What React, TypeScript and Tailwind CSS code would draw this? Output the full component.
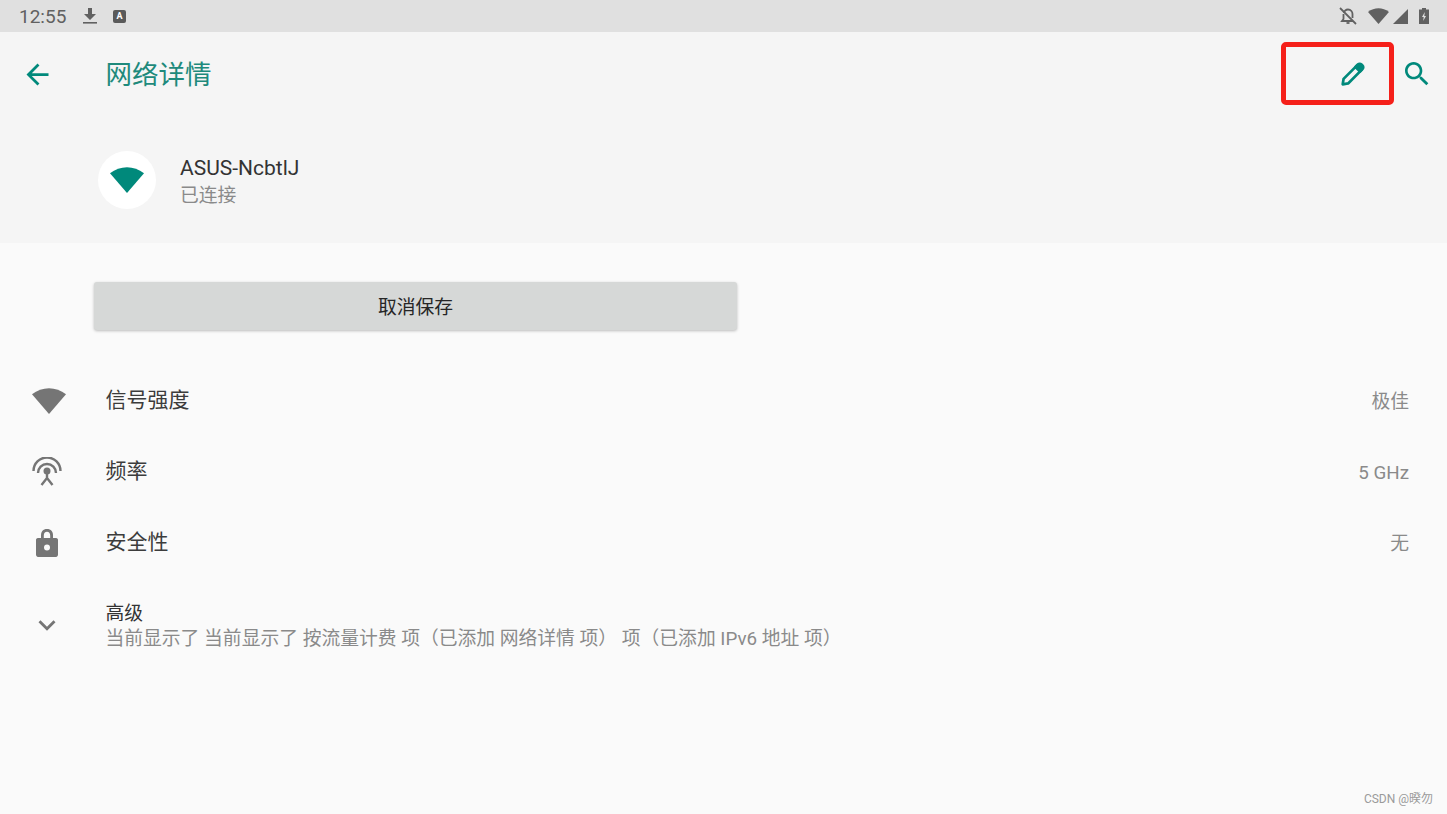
const font = { fontFamily: 'Roboto, "Noto Sans CJK SC", sans-serif' };

function WifiFull({ className }: { className: string }) {
  return (
    <svg viewBox="0 0 34 26" className={className} fill="currentColor">
      <path d="M17 26 L0 6.300 C5 2.400 11 0.300 17 0.300 C23 0.300 29 2.400 34 6.300 Z" />
    </svg>
  );
}

function DetailRow({ icon, label, value, height }: { icon: React.ReactNode; label: string; value: string; height: string }) {
  return (
    <div className={`flex items-center pr-[38px] ${height}`}>
      <div className="w-[105.500px] pl-[30px] shrink-0 flex items-center text-[#757575]">{icon}</div>
      <div className="flex-1 pt-[1px] text-[21px] text-[#3c3c3c]">{label}</div>
      <div className="pt-[3px] text-[18.800px] text-[#8a8a8a]">{value}</div>
    </div>
  );
}

export default function App() {
  return (
    <div className="relative w-[1447px] h-[814px] overflow-hidden bg-[#fafafa]" style={font}>
      {/* status bar */}
      <div className="h-[32px] bg-[#e0e0e0] flex items-center pl-[19px] pr-[18px] text-[#616161]">
        <span className="text-[19px] leading-none w-[64px]">12:55</span>
        <svg viewBox="0 0 14 16" className="w-[14px] h-[16px]" fill="currentColor">
          <path d="M5 0 H9 V6 H13 L7 12 L1 6 H5 Z" />
          <rect x="0" y="14" width="14" height="1.600" />
        </svg>
        <div className="ml-[16px] w-[13px] h-[13px] rounded-[2px] bg-[#5a5a5a] text-white text-[9px] font-bold leading-[13px] text-center">A</div>
        <div className="flex-1" />
        <svg viewBox="0 0 18 18" className="w-[18px] h-[18px] mr-[11px]" fill="none" stroke="currentColor" strokeWidth="1.800">
          <path d="M1 1 L17 17" />
          <path d="M5 6 C5 4 7 2.500 9 2.500 C12 2.500 13.500 5 13.500 7 V11" />
          <path d="M4.500 7 V12 L3 14 H14" />
          <path d="M7.500 16 H10.500" />
        </svg>
        <WifiFull className="w-[21px] h-[16px] mr-[4px]" />
        <svg viewBox="0 0 15 15" className="w-[15px] h-[15px] mr-[11px]" fill="currentColor">
          <path d="M15 0 V15 H0 Z" />
        </svg>
        <svg viewBox="0 0 10 16" className="w-[10px] h-[16px]" fill="currentColor">
          <path d="M3 0 H7 V1.500 H10 V16 H0 V1.500 H3 Z" />
          <path d="M5.800 4 L3 9 H4.700 L4.200 13 L7 8 H5.300 Z" fill="#e0e0e0" />
        </svg>
      </div>

      {/* header */}
      <div className="h-[211px] bg-[#f5f5f5]">
        <div className="h-[84px] flex items-center pl-[21px] pr-[14px] text-[#00897b]">
          <svg viewBox="0 0 24 24" className="w-[33px] h-[33px]" fill="currentColor">
            <path d="M20 11H7.830l5.590-5.590L12 4l-8 8 8 8 1.410-1.410L7.830 13H20v-2z" />
          </svg>
          <h1 className="ml-[51.500px] flex-1 pt-[2px] text-[26.500px] leading-none font-normal text-[#1e8a7c]">网络详情</h1>
          <svg viewBox="0 0 24 24" className="w-[26px] h-[26px] mr-[35px]" fill="none" stroke="currentColor" strokeWidth="2.500" strokeLinejoin="round">
            <path d="M2.500 21.500 L3.300 16.500 L16 3.800 L20.200 8 L7.500 20.700 Z" />
            <path d="M16.500 3.300 C17.500 2.300 18.800 2.300 19.800 3.300 L20.700 4.200 C21.700 5.200 21.700 6.500 20.700 7.500 L18.500 9.700 L14.300 5.500 Z" fill="currentColor" />
          </svg>
          <svg viewBox="0 0 24 24" className="w-[32px] h-[32px]" fill="currentColor">
            <path d="M15.500 14h-.790l-.280-.270C15.410 12.590 16 11.110 16 9.500 16 5.910 13.090 3 9.500 3S3 5.910 3 9.500 5.910 16 9.500 16c1.610 0 3.090-.590 4.230-1.570l.270.280v.790l5 4.990L20.490 19l-4.990-5zm-6 0C7.010 14 5 11.990 5 9.500S7.010 5 9.500 5 14 7.010 14 9.500 11.990 14 9.500 14z" />
          </svg>
        </div>
        <div className="flex items-center pl-[98px] pt-[34px]">
          <div className="w-[58px] h-[58px] rounded-full bg-white flex items-center justify-center">
            <WifiFull className="w-[34px] h-[26px] text-[#00897b]" />
          </div>
          <div className="ml-[24px] pt-[4px]">
            <div className="text-[21px] leading-[28px] text-[#333333]">ASUS-NcbtlJ</div>
            <div className="text-[18.800px] leading-[28px] text-[#8a8a8a]">已连接</div>
          </div>
        </div>
      </div>

      {/* body */}
      <div className="pt-[39px] pl-[94px]">
        <button className="w-[643px] h-[48px] rounded-[3px] bg-[#d6d8d7] shadow-[0_1px_3px_rgba(0,0,0,0.25)] text-[18.800px] leading-[52px] text-[#262626]">取消保存</button>
      </div>
      <div className="pt-[35px]">
        <DetailRow height="h-[71px]" label="信号强度" value="极佳" icon={<WifiFull className="w-[34px] h-[26px] ml-[2px]" />} />
        <DetailRow
          height="h-[71px]"
          label="频率"
          value="5 GHz"
          icon={
            <svg viewBox="0 0 30 30" className="w-[30px] h-[30px] ml-[2px]" fill="none" stroke="currentColor" strokeWidth="2.400">
              <path d="M1.500 14 A13.500 13.500 0 0 1 28.500 14" />
              <path d="M6 16 A9 9 0 0 1 24 16" />
              <circle cx="15" cy="14" r="3.500" fill="currentColor" stroke="none" />
              <path d="M15 16 V21 M15 21 L9.500 28 M15 21 L20.500 28" />
            </svg>
          }
        />
        <DetailRow
          height="h-[71px]"
          label="安全性"
          value="无"
          icon={
            <svg viewBox="0 0 24 30" className="w-[24px] h-[30px] ml-[5px]" fill="currentColor">
              <path fillRule="evenodd" d="M6 10 V7.500 C6 3.500 8 1 12 1 C16 1 18 3.500 18 7.500 V10 H21 C22.500 10 23 11 23 12 V26.500 C23 28 22 29 21 29 H3 C2 29 1 28 1 26.500 V12 C1 11 1.500 10 3 10 Z M8.800 10 H15.200 V7.500 C15.200 5 14 3.700 12 3.700 C10 3.700 8.800 5 8.800 7.500 Z M12 16.500 A3 3 0 1 0 12 22.500 A3 3 0 1 0 12 16.500 Z" />
            </svg>
          }
        />
        <div className="flex items-center pt-[24px]">
          <div className="w-[105.500px] pl-[30px] pb-[4px] shrink-0 text-[#757575]">
            <svg viewBox="0 0 24 24" className="w-[34px] h-[34px]" fill="currentColor">
              <path d="M7.410 8.590L12 13.170l4.590-4.580L18 10l-6 6-6-6 1.410-1.410z" />
            </svg>
          </div>
          <div>
            <div className="text-[18.800px] leading-[25px] text-[#333333]">高级</div>
            <div className="text-[18.800px] leading-[25px] text-[#8a8a8a]">当前显示了 当前显示了 按流量计费 项（已添加 网络详情 项） 项（已添加 IPv6 地址 项）</div>
          </div>
        </div>
      </div>

      {/* annotation + watermark */}
      <div className="absolute left-[1281px] top-[42px] w-[113px] h-[63px] border-[5px] border-[#f5201a] rounded-[5px]" />
      <div className="absolute right-[14px] bottom-[9px] text-[12px] leading-none text-[#9a9a9a]">CSDN @暌勿</div>
    </div>
  );
}
